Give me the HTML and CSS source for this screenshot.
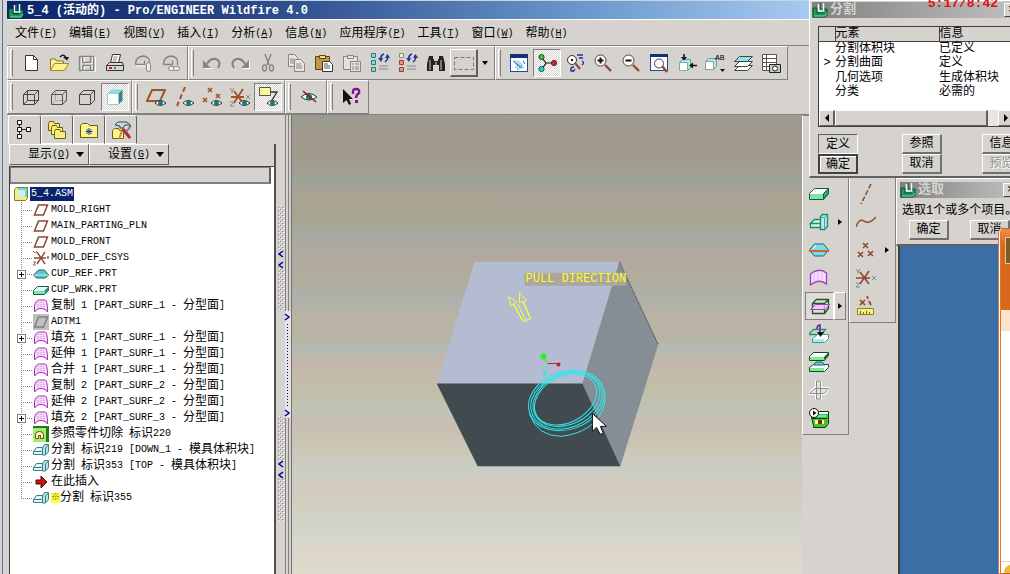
FILE: index.html
```
<!DOCTYPE html>
<html lang="zh-CN">
<head>
    <meta charset="UTF-8">
    <title>5_4 (活动的) - Pro/ENGINEER Wildfire 4.0</title>
    <link rel="stylesheet" href="styles.css">
</head>
<body>
    <!-- icon sheet -->
    <svg class="sheet" aria-hidden="true">
        <defs>
            <pattern id="dots" width="4" height="4" patternUnits="userSpaceOnUse">
                <rect width="4" height="4" fill="#cfc9cb"/>
                <path d="M0 0h1v1h-1zM2 2h1v1h-1z" fill="#fff"/>
                <path d="M1 1h1v1h-1zM3 3h1v1h-1z" fill="#8f8a8c"/>
            </pattern>
        </defs>
        <symbol id="i-logo" viewBox="0 0 16 16">
            <path d="M1 6h4v5h6v-4h4v6l-2 2h-12z" fill="#1c9a5a" stroke="#0b4a34"/>
            <path d="M2 14h11l2-3" fill="none" stroke="#6cdca4"/>
            <path d="M6.500 2v7h5v-8" fill="none" stroke="#e8fff4" stroke-width="1.500"/>
            <path d="M8.500 1v6h2" fill="none" stroke="#0c6a58"/>
        </symbol>
        <symbol id="i-new" viewBox="0 0 20 20"><path d="M4.500 2.500h8l4 4v11h-12z" fill="#fff" stroke="#333"/><path d="M12.500 2.500v4h4" fill="none" stroke="#333"/></symbol>
        <symbol id="i-open" viewBox="0 0 20 20">
            <path d="M1.500 17v-11h5l1 2h7v3" fill="#f6f0a0" stroke="#8a7a1c"/>
            <path d="M1.500 17.500l4-7h14l-4 7z" fill="#fdf28c" stroke="#a08a20"/>
            <path d="M11 4q4-4 6 1" fill="none" stroke="#111" stroke-width="1.300"/><path d="M14 4h6l-2 3.500z" fill="#111"/>
        </symbol>
        <symbol id="i-save" viewBox="0 0 20 20"><path d="M3.500 3.500h14v14h-14zM6.500 3.500v6h8v-6M6.500 17.500v-5h8v5" fill="none" stroke="#fff" transform="translate(1 1)"/><path d="M2.500 3.500h14v14h-14zM5.500 3.500v6h8v-6M5.500 17.500v-5h8v5" fill="none" stroke="#858585" stroke-width="1.400"/></symbol>
        <symbol id="i-print" viewBox="0 0 20 20">
            <path d="M5.500 10l2-8.500h8l-2 8.500z" fill="#fff" stroke="#333"/><path d="M8.500 4h4M8 6h4M7.500 8h4" stroke="#888"/>
            <path d="M1.500 12.500l3-3h13l1 3v5h-17z" fill="#d8d8d0" stroke="#333"/><path d="M1.500 12.500h17" stroke="#333"/><path d="M4 15h3" stroke="#c02020" stroke-width="2"/><path d="M9 15h2" stroke="#20a040" stroke-width="2"/>
        </symbol>
        <symbol id="i-mail" viewBox="0 0 20 20"><path d="M2.500 11.500q0-8 8-8.500q6 1 6 6v3M2.500 11.500h9v-4" fill="none" stroke="#858585" stroke-width="1.300"/><rect x="13.500" y="9.500" width="4" height="9" rx="2" fill="#eee" stroke="#858585"/><path d="M3 13h9" stroke="#fff"/></symbol>
        <symbol id="i-link" viewBox="0 0 20 20"><path d="M2.500 11.500q0-8 8-8.500q6 1 6 6v3M2.500 11.500h9v-4" fill="none" stroke="#858585" stroke-width="1.300"/><rect x="7.500" y="13.500" width="6" height="4" rx="2" fill="#eee" stroke="#858585"/><rect x="12.500" y="13.500" width="6" height="4" rx="2" fill="#eee" stroke="#858585"/></symbol>
        <symbol id="i-undo" viewBox="0 0 20 20"><path d="M2 8v8h8z" fill="#fff"/><path d="M1 7v8h8z" fill="#858585"/><path d="M5 11q3-6 9-5q6 3 2 9" fill="none" stroke="#858585" stroke-width="2.200"/></symbol>
        <symbol id="i-redo" viewBox="0 0 20 20"><path d="M20 8v8h-8z" fill="#fff"/><path d="M19 7v8h-8z" fill="#858585"/><path d="M15 11q-3-6-9-5q-6 3-2 9" fill="none" stroke="#858585" stroke-width="2.200"/></symbol>
        <symbol id="i-cut" viewBox="0 0 20 20"><path d="M7 1l4 11M13 1l-4 11" stroke="#858585" stroke-width="1.500"/><ellipse cx="6.500" cy="15" rx="2" ry="3" fill="none" stroke="#858585" stroke-width="1.400"/><ellipse cx="13.500" cy="15" rx="2" ry="3" fill="none" stroke="#858585" stroke-width="1.400"/></symbol>
        <symbol id="i-copy" viewBox="0 0 20 20"><g fill="#e8e6e2" stroke="#858585"><path d="M2.500 1.500h6l3 3v9h-9z"/><path d="M8.500 6.500h6l4 4v8h-10z"/></g><path d="M4 6h4M4 8h4M4 10h4M10 11h5M10 13h6M10 15h6" stroke="#858585"/></symbol>
        <symbol id="i-paste" viewBox="0 0 20 20"><path d="M1.500 3.500h14v13h-14z" fill="#c09848" stroke="#5c4414"/><path d="M5.500 5.500v-3h6v3z" fill="#f0e088" stroke="#5c4414"/><path d="M8.500 8.500h7l3 3v7h-10z" fill="#fff" stroke="#333"/><path d="M10 11h4M10 13h6M10 15h6" stroke="#555"/></symbol>
        <symbol id="i-pastex" viewBox="0 0 20 20"><g fill="#e4e2de" stroke="#858585"><path d="M1.500 3.500h14v13h-14z"/><path d="M5.500 5.500v-3h6v3z"/><path d="M8.500 8.500h10v10h-10z"/></g><path d="M10 11h2M13 11h4M10 14h2M13 14h4M10 16h2M13 16h4" stroke="#858585"/></symbol>
        <symbol id="i-regen" viewBox="0 0 20 20">
            <g fill="#7fe0d8" stroke="#2c7a78"><path d="M1.500 .500h4v4h-4zM1.500 7.500h4v4h-4zM1.500 14.500h4v4h-4z"/></g>
            <path d="M11 7q-1-5 3-6M17 2q2 4-2 7" fill="none" stroke="#1c3c9c" stroke-width="1.600"/><path d="M8 5h5l-2 4zM15 5h5l-2.500-4z" fill="#1c3c9c"/><path d="M9 13h9M9 16h9" stroke="#888"/>
        </symbol>
        <symbol id="i-regenr" viewBox="0 0 20 20">
            <g fill="#f09088" stroke="#9c3c38"><path d="M1.500 7.500h4v4h-4zM1.500 14.500h4v4h-4z"/><path d="M1.500 .500h4v4h-4z" fill="#eee" stroke="#888"/></g>
            <path d="M11 7q-1-5 3-6M17 2q2 4-2 7" fill="none" stroke="#1c3c9c" stroke-width="1.600"/><path d="M8 5h5l-2 4zM15 5h5l-2.500-4z" fill="#1c3c9c"/><path d="M9 13h9M9 16h9" stroke="#888"/>
        </symbol>
        <symbol id="i-find" viewBox="0 0 20 20"><path d="M3 3h4v3h1v2h4v-2h1v-3h4l2 8v7h-6v-6h-6v6h-6v-7z" fill="#222"/><path d="M4 7v10M15 7v10" stroke="#ccc"/><path d="M9 9h2v3h-2z" fill="#888"/></symbol>
        <symbol id="i-box" viewBox="0 0 20 20"><path d="M.500 4.500h19v12h-19z" fill="none" stroke="#777" stroke-dasharray="4 2"/></symbol>
        <symbol id="i-repaint" viewBox="0 0 20 20"><rect x="1.500" y="1.500" width="17" height="17" fill="#fff" stroke="#1c4c9c"/><path d="M1 1h18v4h-18z" fill="#12307c"/><path d="M5 7q9 0 10 8l-7 2z" fill="#b4e0f0"/><path d="M4 8l9 7M14 8l2 3" stroke="#2c6cac"/><path d="M6 15l4-4M8 17l5-5" stroke="#2c6cac" stroke-dasharray="1 2"/></symbol>
        <symbol id="i-spin" viewBox="0 0 20 20"><path d="M5 5l4 5l-4 6M9 10h8" fill="none" stroke="#111" stroke-width="1.200"/><circle cx="4.500" cy="4" r="2.600" fill="#38c838" stroke="#185818"/><circle cx="4.500" cy="16" r="2.600" fill="#38c8d8" stroke="#185868"/><circle cx="17" cy="10" r="2.600" fill="#c82838" stroke="#681818"/></symbol>
        <symbol id="i-orient" viewBox="0 0 20 20"><circle cx="7" cy="7" r="4.500" fill="#f8f8f4" stroke="#333"/><path d="M6 7h2" stroke="#111" stroke-width="2"/><path d="M10 10l5 6" stroke="#8c4c34" stroke-width="2"/><path d="M12 2h6M14 5h4M17 8q3 2 0 4M9 14q-4 0-3 4h3M8 19l2-3" fill="none" stroke="#1c2c9c" stroke-width="1.300"/></symbol>
        <symbol id="i-zin" viewBox="0 0 20 20"><path d="M12 12l6 6" stroke="#8c4c34" stroke-width="2.400"/><circle cx="7.500" cy="7.500" r="5.500" fill="#fcfcf8" stroke="#444"/><path d="M4.500 7.500h6M7.500 4.500v6" stroke="#111" stroke-width="2"/></symbol>
        <symbol id="i-zout" viewBox="0 0 20 20"><path d="M12 12l6 6" stroke="#8c4c34" stroke-width="2.400"/><circle cx="7.500" cy="7.500" r="5.500" fill="#fcfcf8" stroke="#444"/><path d="M4.500 7.500h6" stroke="#111" stroke-width="2"/></symbol>
        <symbol id="i-refit" viewBox="0 0 20 20"><rect x="1.500" y="1.500" width="17" height="16" fill="#fff" stroke="#1c4c9c"/><path d="M1 1h18v3h-18z" fill="#12307c"/><path d="M13 13l5 6" stroke="#8c4c34" stroke-width="2.400"/><circle cx="10" cy="10.500" r="4.500" fill="#fcfcf8" stroke="#444"/></symbol>
        <symbol id="i-view" viewBox="0 0 20 20"><path d="M2.500 9.500l3-3h8v8l-3 3h-8z" fill="#a8ecec" stroke="#5ca0a0"/><path d="M2.500 9.500h8v8h-8z" fill="#fff" stroke="#7cb0b0"/><path d="M7 1v5M20 12.500h-5" stroke="#111" stroke-width="1.500"/><path d="M4 4h6l-3 3.500zM16 9.500v6l-4-3z" fill="#111"/></symbol>
        <symbol id="i-layers" viewBox="0 0 20 20"><g fill="#fff" stroke="#444"><path d="M1.500 17.500l5-5h13l-5 5z"/><path d="M1.500 13.500l5-5h13l-5 5z"/><path d="M1.500 8.500l5-5h13l-5 5z" fill="#8ce4ec"/></g></symbol>
        <symbol id="i-cam" viewBox="0 0 20 20"><path d="M1.500 1.500h14v16h-14zM1.500 5.500h14M1.500 9.500h14M1.500 13.500h14M5.500 1.500v16" fill="#fff" stroke="#555"/><path d="M8.500 11.500h11v8h-11z" fill="#c8c8c4" stroke="#222"/><circle cx="14" cy="15.500" r="2.500" fill="#fff" stroke="#222"/></symbol>
        <symbol id="i-wire" viewBox="0 0 20 20"><path d="M2.500 7.500h11v10h-11zM6.500 3.500h11v10h-11zM2.500 7.500l4-4M13.500 7.500l4-4M13.500 17.500l4-4M2.500 17.500l4-4" fill="none" stroke="#444"/></symbol>
        <symbol id="i-hidden" viewBox="0 0 20 20"><path d="M6.500 3.500v10h11M2.500 17.500l4-4" fill="none" stroke="#aaa"/><path d="M2.500 7.500h11v10h-11zM2.500 7.500l4-4h11v10l-4 4M13.500 7.500l4-4" fill="none" stroke="#555"/></symbol>
        <symbol id="i-nohid" viewBox="0 0 20 20"><path d="M2.500 7.500h11v10h-11zM2.500 7.500l4-4h11v10l-4 4M13.500 7.500l4-4" fill="none" stroke="#444"/></symbol>
        <symbol id="i-shade" viewBox="0 0 20 20"><path d="M2.500 6.500l4-4h11l-4 4z" fill="#7ce0e4"/><path d="M13.500 6.500l4-4v11l-4 4z" fill="#34848c"/><path d="M2.500 6.500h11v11h-11z" fill="#fff" stroke="#9cc"/></symbol>
        <symbol id="i-eye" viewBox="0 0 20 20"><path d="M9 16q5-5 11 0q-6 5-11 0" fill="#fff" stroke="#333"/><circle cx="14.500" cy="16" r="2.400" fill="#0c7c70"/></symbol>
        <symbol id="i-pln" viewBox="0 0 20 20"><path d="M1 14l5-11h13l-5 11z" fill="none" stroke="#9c5428" stroke-width="2"/><use href="#i-eye"/></symbol>
        <symbol id="i-axs" viewBox="0 0 20 20"><path d="M11 0l-8 19" stroke="#9c5428" stroke-width="2" stroke-dasharray="5 3"/><use href="#i-eye"/></symbol>
        <symbol id="i-pts" viewBox="0 0 20 20"><path d="M6 1l4 4M10 1l-4 4M1 11l4 4M5 11l-4 4M14 7l4 4M18 7l-4 4" stroke="#9c5428" stroke-width="1.600"/><use href="#i-eye"/></symbol>
        <symbol id="i-csy" viewBox="0 0 20 20"><path d="M1 10h13M4 16l9-14M4 4l9 12" stroke="#9c5428" stroke-width="1.800"/><path d="M0 1l2 3l2-3M2 4v2M0 15h4l-4 4h4M16 8l4 4M20 8l-4 4" fill="none" stroke="#888"/><use href="#i-eye"/></symbol>
        <symbol id="i-note" viewBox="0 0 20 20"><path d="M1.500 .500h11v8h-11z" fill="#fcfc9c" stroke="#555"/><path d="M13 5h6l-5 8" fill="none" stroke="#333" stroke-width="1.400"/><use href="#i-eye"/></symbol>
        <symbol id="i-hide" viewBox="0 0 20 20"><path d="M2 10q8-7 16 0q-8 6-16 0" fill="#fff" stroke="#333"/><circle cx="10" cy="10" r="3" fill="#0c7c70"/><path d="M4 4l13 11" stroke="#8c1c1c" stroke-width="1.600"/></symbol>
        <symbol id="i-what" viewBox="0 0 20 20"><path d="M2 2v14l3.500-3l2.500 5l2-1l-2-5h4z" fill="#111"/><path d="M12 7v-2q0-3 3-3q4 0 3 4q-3 2-3 5" fill="none" stroke="#84148c" stroke-width="2.400"/><path d="M14 13h3v3h-3z" fill="#84148c"/></symbol>

        <symbol id="t-tree" viewBox="0 0 20 20"><path d="M4.500 5v10M5 9.500h9" stroke="#333"/><g fill="#fff" stroke="#111"><path d="M2.500 .500h4v4h-4zM2.500 7.500h4v4h-4zM2.500 14.500h4v4h-4zM11.500 7.500h4v4h-4z"/></g></symbol>
        <symbol id="t-fold" viewBox="0 0 20 20"><g fill="#f8ec7c" stroke="#6c5c14"><path d="M1.500 3.500l1-2h4l1 2h5v7h-11z"/><path d="M4.500 7.500l1-2h4l1 2h5v7h-11z"/><path d="M7.500 11.500l1-2h4l1 2h5v7h-11z"/></g></symbol>
        <symbol id="t-fav" viewBox="0 0 20 20"><path d="M1.500 5.500l2-2h5l2 2h8v12h-17z" fill="#fcf48c" stroke="#6c5c14"/><path d="M10 8v7M6.500 11.500h7M7.500 9l5 5M12.500 9l-5 5" stroke="#1c3c8c"/></symbol>
        <symbol id="t-tool" viewBox="0 0 20 20"><path d="M1.500 10.500l2-2h4l1 2h4v8h-11z" fill="#fcf48c" stroke="#6c5c14"/><path d="M12 8l-4 11" stroke="#c88c34" stroke-width="2"/><path d="M12 9l7 9" stroke="#b42c24" stroke-width="3"/><path d="M19 7l-4 5" stroke="#5c84a4" stroke-width="2"/><path d="M4 5l3-3h8q4 1 5 5q-3-3-6-2l-2 3h-3v-2z" fill="#c4dce4" stroke="#345"/></symbol>
        <symbol id="m-asm" viewBox="0 0 16 16"><path d="M1.500 3.500l2-2h11v11l-2 2h-11z" fill="#f8ec7c" stroke="#8c7c24"/><path d="M5 2h9v9h-9z" fill="#6cd4dc"/><path d="M5 4h7v7h-7z" fill="#c4f4f4"/></symbol>
        <symbol id="m-pln" viewBox="0 0 16 16"><path d="M1.500 13l4-10h9l-4 10z" fill="none" stroke="#8c4c2c" stroke-width="1.500"/></symbol>
        <symbol id="m-adt" viewBox="0 0 16 16"><path d="M0 0h16v16h-16z" fill="#c0c0c0"/><path d="M1.500 13l4-10h9l-4 10z" fill="none" stroke="#808080" stroke-width="1.500"/></symbol>
        <symbol id="m-csy" viewBox="0 0 16 16"><path d="M1 8h12M4 14l8-12M4 2l8 12" stroke="#8c4c2c" stroke-width="1.400"/><path d="M0 1l2 2l2-2M0 12h3l-3 3h3M14 6l2 3M16 6l-2 3" fill="none" stroke="#777"/></symbol>
        <symbol id="m-ref" viewBox="0 0 16 16"><path d="M.500 9l5-5h6l4 5l-3 3h-9z" fill="#5cc8cc" stroke="#245c64"/><path d="M1 9h14" stroke="#b4f0f0"/></symbol>
        <symbol id="m-wrk" viewBox="0 0 16 16"><path d="M.500 8.500l4-4h11v4l-4 4h-11z" fill="#e4fff4" stroke="#1c5c44"/><path d="M1 9h10v3h-10z" fill="#7ce4b4"/><path d="M11.500 8.500l4-4v4l-4 4z" fill="#249c74"/></symbol>
        <symbol id="m-srf" viewBox="0 0 16 16"><path d="M1.500 14v-6q1-6 5-6h6q2 1 2 12q-1-2-4-3q-5-2-9 3z" fill="#f8dcf8" stroke="#a42cb4"/><path d="M5 4v7M8 2v8M11 2v9" stroke="#c47cd0" stroke-dasharray="1 1"/></symbol>
        <symbol id="m-cut" viewBox="0 0 16 16"><path d="M0 0h16v16h-16z" fill="#1c7c24"/><path d="M0 2h13v14h-13z" fill="#a4ec6c"/><path d="M2.500 12.500v-4q0-3 4-3q4 0 4 3v4h-3v-3h-2v3z" fill="#fcfcd4" stroke="#7c3c14"/></symbol>
        <symbol id="m-spl" viewBox="0 0 16 16"><path d="M.500 9.500l3-4h7l-1 4zM.500 9.500h9v3h-9z" fill="#e4fafa" stroke="#3c7c84"/><path d="M9.500 6l2-3.500h4v7l-3 3.500h-3z" fill="#b4e4e8" stroke="#3c7c84"/><path d="M12.500 6v6M12.500 6l3-3" stroke="#3c7c84"/></symbol>
        <symbol id="m-ins" viewBox="0 0 16 16"><path d="M3 6h5v-4l6 6l-6 6v-4h-5z" fill="#c41414" stroke="#4c0808"/></symbol>

        <symbol id="s-wrk" viewBox="0 0 20 20"><path d="M.500 9.500l5-5h14v5l-5 6h-14z" fill="#fff" stroke="#145c3c"/><path d="M1 10h13v5h-13z" fill="#7ce4a4"/><path d="M14.500 9.500l5-5v5l-5 6z" fill="#2ca47c" stroke="#145c3c"/></symbol>
        <symbol id="s-spl" viewBox="0 0 20 20"><path d="M1.500 11.500l4-4h7v4zM1.500 11.500h10v4h-10z" fill="#d4f4ec" stroke="#1c8c68" stroke-width="1.300"/><path d="M11.500 4.500l2-2h5v12l-3 3h-4z" fill="#b4ecf0" stroke="#1c8c68" stroke-width="1.300"/><path d="M15.500 5.500v11M15.500 5.500l3-3M12 5.500h3" stroke="#5c94ac"/></symbol>
        <symbol id="s-ref" viewBox="0 0 20 20"><path d="M.500 10l5-6h9l5 6l-5 6h-9z" fill="#7cdce4" stroke="#14646c"/><path d="M0 11h20" stroke="#d46424" stroke-width="2"/><path d="M4 9l3-4" stroke="#fff"/></symbol>
        <symbol id="s-srf" viewBox="0 0 20 20"><path d="M1.500 17v-11q9-7 16-1v11q-7-6-16 1z" fill="#f4e0fc" stroke="#a43cc4" stroke-width="1.300"/><path d="M5 4v9M9 3v9M13 3v9" stroke="#dcb4ec"/></symbol>
        <symbol id="s-vol" viewBox="0 0 20 20"><path d="M2.500 7.500l4-4h12v9l-4 5h-12zM2.500 7.500h12v10M14.500 7.500l4-4" fill="none" stroke="#145c24" stroke-width="1.300"/><path d="M.500 13.500l5-5h14l-4 5z" fill="#f0ccf8" fill-opacity=".7" stroke="#a43cc4"/></symbol>
        <symbol id="s-ext" viewBox="0 0 20 20"><path d="M.500 9.500l4-4h12l-4 5h-12z" fill="none" stroke="#1c9c6c" stroke-width="1.300"/><path d="M3.500 14.500l5-4h11v4l-4 4h-12z" fill="#fff" stroke="#2c9c9c"/><path d="M4 15h11v3h-11z" fill="#a4ecf0"/><path d="M8 5q0-4 3-4v9" fill="none" stroke="#5c1c8c" stroke-width="1.500"/><path d="M8 8h7l-3.500 5z" fill="#111"/></symbol>
        <symbol id="s-open" viewBox="0 0 20 20"><path d="M.500 4.500l4-4h15v3l-4 5h-15z" fill="#fff" stroke="#0c4c2c"/><path d="M1 5h14v3h-14z" fill="#7cec8c"/><path d="M15 5l4-4v3l-4 4z" fill="#0c5c3c"/><path d="M.500 15.500l4-3h15v3l-4 4h-15z" fill="#fff" stroke="#0c4c2c"/><path d="M5 13l2-3h6l3 3z" fill="#5cd4e4" stroke="#14646c"/><path d="M1 16h14v3h-14z" fill="#7cec8c"/></symbol>
        <symbol id="s-pin" viewBox="0 0 20 20"><path d="M.500 13.500l5-5h14l-4 5zM7.500 2h4v16h-4z" fill="none" stroke="#fff" stroke-width="3"/><path d="M.500 13.500l5-5h14l-4 5zM7.500 1h4v18h-4z" fill="#e4e2de" stroke="#8c8c8c"/></symbol>
        <symbol id="s-run" viewBox="0 0 20 20"><path d="M2.500 9.500l4-6h13v12l-3 4h-12v-2z" fill="#44c434" stroke="#0c3c14"/><path d="M9 5h10" stroke="#fff" stroke-width="2"/><path d="M5 8h12" stroke="#5ce4ec" stroke-width="2"/><path d="M3 10.500h15" stroke="#0c3c14"/><path d="M6 12h9v4h-9z" fill="#fcfc8c"/><path d="M9 12h4v4h-4z" fill="#7c2c0c"/><circle cx="5" cy="5" r="4.500" fill="#fff" stroke="#111"/><path d="M4 2.500v5l3.500-2.500z" fill="#111"/></symbol>
        <symbol id="d-axs" viewBox="0 0 20 20"><path d="M15 0l-10 20" stroke="#8c4c2c" stroke-width="1.600" stroke-dasharray="5 2"/></symbol>
        <symbol id="d-crv" viewBox="0 0 20 20"><path d="M0 15q3-9 8-6q5 4 12-4" fill="none" stroke="#8c4c2c" stroke-width="1.500"/></symbol>
        <symbol id="d-pts" viewBox="0 0 20 20"><path d="M7 3l5 5M12 3l-5 5M2 12l5 5M7 12l-5 5M12 11l5 5M17 11l-5 5" stroke="#8c4c2c" stroke-width="1.600"/></symbol>
        <symbol id="d-csy" viewBox="0 0 20 20"><path d="M0 10h14M4 16l9-13M4 4l9 12" stroke="#8c4c2c" stroke-width="1.600"/><path d="M0 1l2 3l2-3M2 4v2M0 15h4l-4 4h4M16 8l4 4M20 8l-4 4" fill="none" stroke="#888"/></symbol>
        <symbol id="d-ana" viewBox="0 0 20 20"><path d="M4 4l5 5M9 4l-5 5M11 0l1 3M13 5l2 4" stroke="#8c4c2c" stroke-width="1.700"/><path d="M1.500 12.500h16v6h-16z" fill="#f4f07c" stroke="#8c8430"/><path d="M4.500 18v-3M7.500 18v-2M10.500 18v-3M13.500 18v-2" stroke="#6c6420"/></symbol>
    </svg>

    <main class="main-window">
        <header class="title-bar">
            <svg class="ic16"><use href="#i-logo"/></svg>
            <h1>5_4 (活动的) - Pro/ENGINEER Wildfire 4.0</h1>
        </header>
        <nav class="menu-bar">
            <button><b>文件</b>(<u>F</u>)</button>
            <button><b>编辑</b>(<u>E</u>)</button>
            <button><b>视图</b>(<u>V</u>)</button>
            <button><b>插入</b>(<u>I</u>)</button>
            <button><b>分析</b>(<u>A</u>)</button>
            <button><b>信息</b>(<u>N</u>)</button>
            <button><b>应用程序</b>(<u>P</u>)</button>
            <button><b>工具</b>(<u>T</u>)</button>
            <button><b>窗口</b>(<u>W</u>)</button>
            <button><b>帮助</b>(<u>H</u>)</button>
        </nav>

        <div class="toolbar">
            <div class="group">
                <button class="tool" aria-label="新建"><svg><use href="#i-new"/></svg></button>
                <button class="tool" aria-label="打开"><svg><use href="#i-open"/></svg></button>
                <button class="tool" aria-label="保存"><svg><use href="#i-save"/></svg></button>
                <button class="tool" aria-label="打印"><svg><use href="#i-print"/></svg></button>
                <button class="tool" aria-label="邮件附件"><svg><use href="#i-mail"/></svg></button>
                <button class="tool" aria-label="邮件链接"><svg><use href="#i-link"/></svg></button>
            </div>
            <div class="group">
                <button class="tool" aria-label="撤消"><svg><use href="#i-undo"/></svg></button>
                <button class="tool" aria-label="重做"><svg><use href="#i-redo"/></svg></button>
                <button class="tool" aria-label="剪切"><svg><use href="#i-cut"/></svg></button>
                <button class="tool" aria-label="复制"><svg><use href="#i-copy"/></svg></button>
                <button class="tool" aria-label="粘贴"><svg><use href="#i-paste"/></svg></button>
                <button class="tool" aria-label="选择性粘贴"><svg><use href="#i-pastex"/></svg></button>
                <button class="tool" aria-label="再生"><svg><use href="#i-regen"/></svg></button>
                <button class="tool" aria-label="再生管理器"><svg><use href="#i-regenr"/></svg></button>
                <button class="tool" aria-label="查找"><svg><use href="#i-find"/></svg></button>
                <button class="tool raised" aria-label="框选"><svg><use href="#i-box"/></svg></button>
                <button class="drop" aria-label="选取方式"></button>
            </div>
            <div class="group">
                <button class="tool" aria-label="重画"><svg><use href="#i-repaint"/></svg></button>
                <button class="tool pressed" aria-label="旋转中心"><svg><use href="#i-spin"/></svg></button>
                <button class="tool" aria-label="定向模式"><svg><use href="#i-orient"/></svg></button>
                <button class="tool" aria-label="放大"><svg><use href="#i-zin"/></svg></button>
                <button class="tool" aria-label="缩小"><svg><use href="#i-zout"/></svg></button>
                <button class="tool" aria-label="重新调整"><svg><use href="#i-refit"/></svg></button>
                <button class="tool" aria-label="重定向"><svg><use href="#i-view"/></svg></button>
                <button class="tool" aria-label="已保存视图"><svg viewBox="0 0 20 20"><path d="M.500 8.500l3-3h8v8l-3 3h-8z" fill="#a8ecec" stroke="#5ca0a0"/><path d="M.500 8.500h8v8h-8z" fill="#fff" stroke="#999"/><text x="10" y="7" class="ab">AB</text><path d="M15 16h5l-2.500 3z" fill="#111"/></svg></button>
                <button class="tool" aria-label="层"><svg><use href="#i-layers"/></svg></button>
                <button class="tool" aria-label="视图管理器"><svg><use href="#i-cam"/></svg></button>
            </div>
        </div>
        <div class="toolbar">
            <div class="group">
                <button class="tool" aria-label="线框"><svg><use href="#i-wire"/></svg></button>
                <button class="tool" aria-label="隐藏线"><svg><use href="#i-hidden"/></svg></button>
                <button class="tool" aria-label="无隐藏线"><svg><use href="#i-nohid"/></svg></button>
                <button class="tool pressed" aria-label="着色"><svg><use href="#i-shade"/></svg></button>
            </div>
            <div class="group">
                <button class="tool" aria-label="平面显示"><svg><use href="#i-pln"/></svg></button>
                <button class="tool" aria-label="轴显示"><svg><use href="#i-axs"/></svg></button>
                <button class="tool" aria-label="点显示"><svg><use href="#i-pts"/></svg></button>
                <button class="tool" aria-label="坐标系显示"><svg><use href="#i-csy"/></svg></button>
                <button class="tool pressed" aria-label="注释显示"><svg><use href="#i-note"/></svg></button>
            </div>
            <div class="group single">
                <button class="tool" aria-label="遮蔽"><svg><use href="#i-hide"/></svg></button>
            </div>
            <div class="group single">
                <button class="tool" aria-label="帮助"><svg><use href="#i-what"/></svg></button>
            </div>
        </div>

        <div class="workspace">
            <aside class="navigator">
                <div class="tabs">
                    <button class="tab active" aria-label="模型树"><svg><use href="#t-tree"/></svg></button>
                    <button class="tab" aria-label="文件夹"><svg><use href="#t-fold"/></svg></button>
                    <button class="tab" aria-label="收藏夹"><svg><use href="#t-fav"/></svg></button>
                    <button class="tab" aria-label="连接"><svg><use href="#t-tool"/></svg></button>
                </div>
                <div class="tree-panel">
                    <div class="tree-menu">
                        <button><b>显示</b>(<u>O</u>)</button>
                        <button><b>设置</b>(<u>G</u>)</button>
                    </div>
                    <div class="tree-box">
                        <div class="tree-head"></div>
                        <div class="root"><svg class="ic16"><use href="#m-asm"/></svg><span>5_4.ASM</span></div>
                        <ul class="tree">
                            <li><svg><use href="#m-pln"/></svg><span>MOLD_RIGHT</span></li>
                            <li><svg><use href="#m-pln"/></svg><span>MAIN_PARTING_PLN</span></li>
                            <li><svg><use href="#m-pln"/></svg><span>MOLD_FRONT</span></li>
                            <li><svg><use href="#m-csy"/></svg><span>MOLD_DEF_CSYS</span></li>
                            <li class="plus"><svg><use href="#m-ref"/></svg><span>CUP_REF.PRT</span></li>
                            <li><svg><use href="#m-wrk"/></svg><span>CUP_WRK.PRT</span></li>
                            <li><svg><use href="#m-srf"/></svg><span><b>复制</b> 1 [PART_SURF_1 - <b>分型面</b>]</span></li>
                            <li><svg><use href="#m-adt"/></svg><span>ADTM1</span></li>
                            <li class="plus"><svg><use href="#m-srf"/></svg><span><b>填充</b> 1 [PART_SURF_1 - <b>分型面</b>]</span></li>
                            <li><svg><use href="#m-srf"/></svg><span><b>延伸</b> 1 [PART_SURF_1 - <b>分型面</b>]</span></li>
                            <li><svg><use href="#m-srf"/></svg><span><b>合并</b> 1 [PART_SURF_1 - <b>分型面</b>]</span></li>
                            <li><svg><use href="#m-srf"/></svg><span><b>复制</b> 2 [PART_SURF_2 - <b>分型面</b>]</span></li>
                            <li><svg><use href="#m-srf"/></svg><span><b>延伸</b> 2 [PART_SURF_2 - <b>分型面</b>]</span></li>
                            <li class="plus"><svg><use href="#m-srf"/></svg><span><b>填充</b> 2 [PART_SURF_3 - <b>分型面</b>]</span></li>
                            <li><svg><use href="#m-cut"/></svg><span><b>参照零件切除</b> <b>标识</b>220</span></li>
                            <li><svg><use href="#m-spl"/></svg><span><b>分割</b> <b>标识</b>219 [DOWN_1 - <b>模具体积块</b>]</span></li>
                            <li><svg><use href="#m-spl"/></svg><span><b>分割</b> <b>标识</b>353 [TOP - <b>模具体积块</b>]</span></li>
                            <li><svg><use href="#m-ins"/></svg><span><b>在此插入</b></span></li>
                            <li><svg><use href="#m-spl"/></svg><span><i>※</i><b>分割</b> <b>标识</b>355</span></li>
                        </ul>
                    </div>
                </div>
            </aside>

            <div class="splitter">
                <svg width="14" height="316" viewBox="0 0 14 316">
                    <path d="M1 0h6v105h-6zM1 210h6v105h-6z" fill="url(#dots)"/>
                    <path d="M1 45h6v16h-6zM1 255h6v16h-6z" fill="#d6d3ce"/>
                    <path d="M6 45l-4 3l4 3M6 56l-4 3l4 3M6 255l-4 3l4 3M6 266l-4 3l4 3" fill="none" stroke="#00009c" stroke-width="1.500"/>
                    <path d="M8 105h6v107h-6z" fill="#e8e6e4"/>
                    <path d="M8 108l4 3l-4 3M8 204l4 3l-4 3" fill="none" stroke="#00009c" stroke-width="1.500"/>
                    <path d="M10.500 118v82" stroke="#00009c" stroke-dasharray="1 2"/>
                </svg>
            </div>

            <section class="viewport">
                <svg viewBox="0 0 511 460">
                    <path d="M183 147H328L291 269H145z" fill="#b3bcd0"/>
                    <path d="M328 147L367 230L329 352L291 269z" fill="#858d95"/>
                    <path d="M145 269H291L329 352H186z" fill="#414b4f"/>
                    <path d="M328 147L367 230" stroke="#333" stroke-dasharray="1 1"/>
                    <path d="M233 158h102v13h-102z" fill="#aba69e"/>
                    <text x="234" y="167" class="pull">PULL DIRECTION</text>
                    <g fill="none" stroke="#fcfc3c">
                        <path d="M231 206l-9-16l-3 1l-2-9l8 5l-3 2l10 18l7-3l-8-17l-3 1l0-10l7 8l-3 1l7 17"/>
                        <path d="M226 189l9 18"/>
                    </g>
                    <g fill="none" stroke="#2ce8ec">
                        <ellipse cx="275" cy="286" rx="39" ry="29" transform="rotate(-20 275 286)"/>
                        <ellipse cx="275" cy="286" rx="37" ry="27" transform="rotate(-22 275 286)"/>
                        <ellipse cx="275" cy="285" rx="35" ry="25" transform="rotate(-25 275 285)"/>
                        <ellipse cx="274" cy="285" rx="33" ry="23" transform="rotate(-28 274 285)"/>
                        <path d="M238 300q8 22 32 22q32-4 42-28q4-14-2-24"/>
                    </g>
                    <path d="M256 249l-4-7" stroke="#2cec2c"/><circle cx="252" cy="242" r="3" fill="#2cec2c"/>
                    <path d="M256 249h12" stroke="#c41c34"/><circle cx="267" cy="250" r="2" fill="#c41c34"/>
                    <path d="M256 249l-3 10" stroke="#2ce8ec"/><circle cx="253" cy="259" r="2" fill="#2ce8ec"/>
                    <path d="M301 299v18l4-4l4 7l3-1l-3-7h6z" fill="#fff" stroke="#111"/>
                </svg>
            </section>

            <aside class="side-tools">
                <div class="side-col">
                    <button class="tool" aria-label="工件"><svg><use href="#s-wrk"/></svg></button>
                    <button class="tool" aria-label="模具元件"><svg><use href="#s-spl"/></svg></button><button class="more" aria-label="更多元件"></button>
                    <button class="tool" aria-label="收缩"><svg><use href="#s-ref"/></svg></button>
                    <button class="tool" aria-label="分型曲面"><svg><use href="#s-srf"/></svg></button>
                    <button class="tool boxed" aria-label="体积块分割"><svg><use href="#s-vol"/></svg></button><button class="more boxed" aria-label="更多体积块"></button>
                    <button class="tool" aria-label="抽取元件"><svg><use href="#s-ext"/></svg></button>
                    <button class="tool" aria-label="模具开模"><svg><use href="#s-open"/></svg></button>
                    <button class="tool" aria-label="顶杆孔"><svg><use href="#s-pin"/></svg></button>
                    <button class="tool" aria-label="转到布局"><svg><use href="#s-run"/></svg></button>
                </div>
                <div class="side-col">
                    <button class="tool" aria-label="基准轴"><svg><use href="#d-axs"/></svg></button>
                    <button class="tool" aria-label="曲线"><svg><use href="#d-crv"/></svg></button>
                    <button class="tool" aria-label="基准点"><svg><use href="#d-pts"/></svg></button><button class="more" aria-label="更多基准点"></button>
                    <button class="tool" aria-label="坐标系"><svg><use href="#d-csy"/></svg></button>
                    <button class="tool" aria-label="分析特征"><svg><use href="#d-ana"/></svg></button>
                </div>
            </aside>
        </div>
    </main>

    <!-- floating windows -->
    <section class="dialog split">
        <header class="dialog-title"><svg class="ic16"><use href="#i-logo"/></svg><h2>分割</h2><button class="close" aria-label="关闭">×</button></header>
        <div class="list">
            <table>
                <thead><tr><th class="mark"></th><th class="item">元素</th><th>信息</th></tr></thead>
                <tbody>
                    <tr><td></td><td>分割体积块</td><td>已定义</td></tr>
                    <tr><td class="current">&gt;</td><td>分割曲面</td><td>定义</td></tr>
                    <tr><td></td><td>几何选项</td><td>生成体积块</td></tr>
                    <tr><td></td><td>分类</td><td>必需的</td></tr>
                </tbody>
            </table>
            <div class="scroll"><button class="left" aria-label="向左"></button><span class="thumb"></span><button class="right" aria-label="向右"></button></div>
        </div>
        <div class="dialog-buttons">
            <button class="down">定义</button><button>参照</button><button>信息</button>
            <button class="default">确定</button><button>取消</button><button disabled>预览</button>
        </div>
    </section>

    <section class="dialog select">
        <header class="dialog-title"><svg class="ic16"><use href="#i-logo"/></svg><h2>选取</h2><button class="close" aria-label="关闭">×</button></header>
        <p>选取1个或多个项目。</p>
        <div class="select-buttons"><button>确定</button><button>取消</button></div>
    </section>

    <!-- player docked at the right edge -->
    <div class="player"><div class="player-head"><span class="badge"></span></div><div class="player-strip"></div><div class="player-foot"><span class="orb"></span></div></div>
    <div class="clock">5:17/8:42</div>
</body>
</html>
```

FILE: styles.css
```
*, *::before, *::after { box-sizing: border-box; }
body {
    margin: 0;
    min-height: 100vh;
    position: relative;
    overflow: hidden;
    background: #3a6ea5;
    font: 10px/16px 'Liberation Mono', 'Noto Sans CJK SC', monospace;
    color: #000;
}
button {
    margin: 0;
    padding: 0;
    border: 0;
    background: none;
    font: inherit;
    color: inherit;
}
b { font-weight: normal; font-size: 12px; line-height: 1; vertical-align: -1px; }
.sheet { position: absolute; width: 0; height: 0; }
.ic16 { width: 16px; height: 16px; flex: none; }
.ab { font: 8px 'Liberation Mono', monospace; }

/* main window */
.main-window {
    margin-right: 110px;
    min-height: 100vh;
    display: flex;
    flex-direction: column;
    background: #d6d3ce;
    border-left: 2px solid #d6d3ce;
    border-right: 2px solid #404040;
    box-shadow: inset 1px 0 #4a78a8;
    padding-left: 5px;
}
.title-bar {
    height: 20px;
    padding: 1px 0 0 1px;
    display: flex;
    align-items: center;
    gap: 3px;
    border-top: 1px solid #c8d4e4;
    border-bottom: 1px solid #fff;
    background: linear-gradient(to right, #0a246a, #2c4c8c 30%, #6c98cc 65%, #a6caf0 90%);
}
.title-bar h1 {
    margin: 0;
    font: bold 12px/16px 'Liberation Mono', 'Noto Sans CJK SC', monospace;
    color: #fff;
    white-space: nowrap;
}
.menu-bar {
    height: 26px;
    padding: 3px 0 0 8px;
    display: flex;
    align-items: center;
    gap: 12px;
    border-bottom: 1px solid #808080;
}
.toolbar { height: 34px; display: flex; }
.group {
    display: flex;
    align-items: center;
    padding-right: 2px;
    border: 1px solid #808080;
    border-top-color: #fff;
    border-left-color: #fff;
}
.group::before {
    content: '';
    width: 3px;
    height: 28px;
    margin: 0 4px 0 2px;
    border: 1px solid #fff;
    border-right-color: #808080;
}
.single { padding-right: 3px; }
.tool {
    width: 28px;
    height: 28px;
    flex: none;
    display: grid;
    place-items: center;
}
.tool svg { width: 20px; height: 20px; overflow: visible; }
.pressed {
    background: repeating-conic-gradient(#fff 0 25%, #d6d3ce 0 50%) 0 0 / 2px 2px;
    border: 1px solid #808080;
    border-right-color: #fff;
    border-bottom-color: #fff;
}
.raised {
    border: 1px solid #fff;
    border-right: 2px solid #606060;
    border-bottom: 2px solid #606060;
}
.drop { width: 14px; height: 28px; display: grid; place-items: center; }
.drop::before, .tree-menu button::after { content: ''; border: 3px solid transparent; border-top: 4px solid #000; border-bottom: 0; }

/* model tree */
.workspace { flex: 1; display: flex; border-top: 1px solid #808080; }
.navigator { width: 269px; flex: none; display: flex; flex-direction: column; }
.tabs { display: flex; height: 29px; padding-left: 1px; }
.tab {
    width: 32px;
    display: grid;
    place-items: center;
    border: 1px solid #fff;
    border-right-color: #606060;
    border-radius: 3px 3px 0 0;
}
.tab.active { width: 33px; border-bottom-color: #d6d3ce; }
.tab svg { width: 20px; height: 20px; }
.tree-panel { flex: 1; display: flex; flex-direction: column; border-right: 2px solid #505050; padding-left: 2px; }
.tree-menu { display: flex; height: 22px; }
.tree-menu button {
    width: 80px;
    height: 21px;
    padding-left: 14px;
    display: flex;
    align-items: center;
    justify-content: center;
    border: 1px solid #fff;
    border-right-color: #606060;
    border-bottom-color: #606060;
}
.tree-menu button::after { margin-left: 6px; border-width: 5px 4px 0; }
.tree-box {
    flex: 1;
    background: #fff;
    border-left: 1px solid #404040;
    border-top: 1px solid #404040;
}
.tree-head { height: 17px; margin-right: 3px; background: #d6d3ce; border: 1px solid #808080; border-right: 2px solid #606060; border-bottom: 2px solid #808080; }
.root { display: flex; align-items: center; gap: 1px; height: 17px; margin: 1px 0 0 3px; }
.root span { background: #0a246a; color: #fff; line-height: 14px; padding: 0 1px; }
.tree { list-style: none; margin: 0; padding: 0 0 0 11px; }
.tree li {
    height: 16px;
    padding-left: 12px;
    display: flex;
    align-items: center;
    white-space: pre;
    background:
        repeating-linear-gradient(to right, #888 0 1px, transparent 1px 2px) 0 8px / 12px 1px no-repeat,
        repeating-linear-gradient(#888 0 1px, transparent 1px 2px) 0 0 / 1px 16px no-repeat;
}
.tree li:last-child { background-size: 12px 1px, 1px 8px; }
.tree svg { width: 16px; height: 16px; margin-right: 2px; flex: none; }
.tree i { font: 9px/8px 'Liberation Mono', 'Noto Sans CJK SC', monospace; color: #6c6c00; background: #ffff40; }
.plus::before {
    content: '';
    width: 9px;
    height: 9px;
    flex: none;
    margin: 0 7px 0 -16px;
    border: 1px solid #808080;
    background:
        linear-gradient(#000, #000) center / 5px 1px no-repeat,
        linear-gradient(#000, #000) center / 1px 5px no-repeat,
        #fff;
}
.splitter {
    width: 16px;
    flex: none;
    padding-top: 91px;
    padding-left: 1px;
    background: linear-gradient(to right, #d6d3ce 9px, #808080 9px 10px, #d6d3ce 10px 12px, #808080 12px 13px, #d6d3ce 13px 15px, #707070 15px);
}
.splitter svg { display: block; }
.viewport {
    flex: 1;
    min-width: 0;
    background: linear-gradient(#9a9c92, #a3998d 5%, #a09c8c 10%, #9da297 14%, #aaa296 17%, #a8a48e 22%, #a5aaa2 26%, #b1a99f 31%, #b1ad9c 36%, #adb0aa 40%, #bab3a6 44%, #b8b4a3 48%, #b5bab1 51%, #c4b7ac 54%, #c1bfa9 60%, #c1c3b5 64%, #c9beb2 68%, #cbc8b6 73%, #c9cdc4 77%, #d2cabe 81%, #d4d0c0 86%, #d1d4cb 90%, #dcd6ca 94%, #dddacb);
}
.viewport > svg { display: block; width: 100%; height: 100%; }
.pull { font: 12px 'Liberation Mono', monospace; fill: #fcfc1c; }

/* mold toolbars */
.side-tools { display: flex; align-items: flex-start; width: 96px; flex: none; }
.side-col {
    width: 47px;
    display: grid;
    grid-template-columns: 29px 12px;
    grid-auto-rows: 28px;
    padding: 64px 2px 2px;
    border: 1px solid #808080;
    border-left-color: #fff;
}
.side-col .tool { grid-column: 1; }
.more { grid-column: 2; display: grid; place-items: center; }
.more::before { content: ''; border: 3px solid transparent; border-left: 4px solid #000; border-right: 0; }
.side-col .boxed { width: auto; border: 1px solid #808080; border-right-color: #fff; }
.side-col .more.boxed { border-color: #fff #808080 #808080 #fff; }
.side-col .tool.boxed { background: #dedbd8; }

/* dialogs */
.dialog {
    position: absolute;
    background: #d6d3ce;
    border: 1px solid #fff;
    border-bottom: 2px solid #606060;
    font: 12px/14px 'Liberation Mono', 'Noto Sans CJK SC', monospace;
}
.dialog-title {
    height: 16px;
    display: flex;
    align-items: center;
    gap: 2px;
    background: linear-gradient(to right, #808080, #a8a8a8 60%, #c0c0c0);
}
.dialog-title h2 { margin: 0; flex: 1; font-size: 13px; line-height: 18px; color: #d6d3ce; }
.close { width: 15px; height: 14px; background: #d6d3ce; border: 1px solid #fff; border-right-color: #404040; border-bottom-color: #404040; line-height: 10px; }
.dialog-buttons button, .select-buttons button {
    width: 40px;
    height: 20px;
    padding-top: 1px;
    border: 1px solid #fff;
    border-right: 2px solid #707070;
    border-bottom: 2px solid #707070;
}
.split { right: -12px; top: 0; width: 213px; height: 178px; padding: 1px 2px 0; }
.list { margin: 8px 0 7px 6px; background: #fff; border: 1px solid #404040; border-right: 0; }
.list table { width: 100%; height: 72px; margin-bottom: 11px; border-collapse: collapse; table-layout: fixed; }
.list th { height: 14px; padding: 0; background: #d6d3ce; text-align: left; font-weight: normal; border-left: 1px solid #404040; border-bottom: 1px solid #404040; }
.list th.mark { width: 16px; border-left: 0; }
.list th.item { width: 104px; }
.list td { height: 14px; padding: 0; }
.list td.current { text-align: center; }
.scroll { display: flex; height: 16px; background: #e8e6e4; }
.scroll button, .thumb { background: #d6d3ce; border: 1px solid #fff; border-right: 2px solid #606060; border-bottom-color: #606060; }
.scroll button { width: 16px; display: grid; place-items: center; }
.left::before { content: ''; border: 4px solid transparent; border-right-color: #000; border-left: 0; }
.right::before { content: ''; border: 4px solid transparent; border-left-color: #000; border-right: 0; }
.thumb { width: 153px; margin-right: 10px; }
.dialog-buttons { display: grid; grid-template-columns: 84px 80px 40px; padding-left: 6px; }
.dialog-buttons .down { border: 1px solid #606060; border-right-color: #fff; border-bottom-color: #fff; }
.dialog-buttons .default { border: 2px solid #404040; box-shadow: inset 1px 1px #fff; }
.dialog-buttons button:disabled { color: #909090; text-shadow: 1px 1px #fff; }
.select { right: -12px; top: 178px; width: 126px; padding: 3px 3px 4px; }
.select p { margin: 6px 0 2px 2px; white-space: nowrap; }
.select-buttons { display: flex; gap: 21px; padding-left: 9px; }

/* video player at the right edge */
.player {
    position: absolute;
    right: -10px;
    top: 228px;
    bottom: 0;
    width: 22px;
    display: flex;
    flex-direction: column;
    background: #fff;
    border: 1px solid #c86428;
    border-left: 3px double #d87838;
    border-radius: 5px 0 0 0;
}
.player-head { height: 81px; padding: 8px 0 0 4px; background: linear-gradient(#f08c48, #d8681c 20%, #d8681c); }
.badge { display: block; width: 16px; height: 27px; border: 1px solid #e8c890; background: #7c5c24; }
.player-strip { height: 21px; background: #fce4cc; }
.player-foot { margin-top: auto; height: 12px; padding: 3px; border-top: 1px solid #e8d0b8; overflow: hidden; }
.orb { display: block; width: 14px; height: 14px; border-radius: 50%; background: #f4b82c; }
.clock {
    position: absolute;
    right: 12px;
    top: -4px;
    font: bold 13px/16px 'Liberation Mono', monospace;
    color: #e01010;
}
```
